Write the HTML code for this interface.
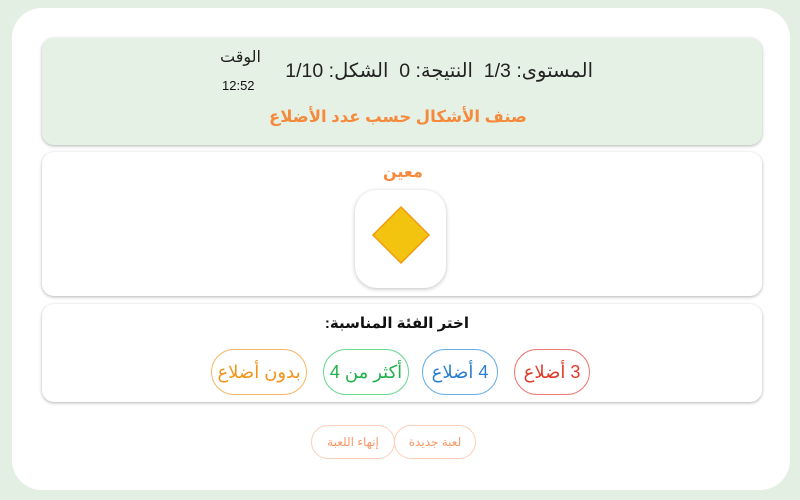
<!DOCTYPE html>
<html dir="rtl"><head><meta charset="utf-8"><style>
*{box-sizing:border-box;margin:0;padding:0}
body{width:800px;height:500px;background:#e4efe4;font-family:"Liberation Sans","DejaVu Sans",sans-serif;position:relative;overflow:hidden}
.card{position:absolute;left:12px;top:8px;width:778px;height:482px;background:#fff;border-radius:30px}
.p{position:absolute;left:42px;width:720px;border-radius:12px;box-shadow:0 1px 3px rgba(0,0,0,.3);background:#fff}
.t{position:absolute;white-space:nowrap}
.btn{position:absolute;top:349px;height:46px;border-radius:23px;border:1px solid;font-size:18px;display:flex;align-items:center;justify-content:center;background:#fff}
.sb{position:absolute;top:425px;height:34px;border:1px solid #fcd0b8;border-radius:17px;color:#f79a6a;font-size:12px;display:flex;align-items:center;justify-content:center}
</style></head><body>
<div class="card"></div>
<div class="p" style="top:38px;height:107px;background:#e6f1e6"></div>
<div class="t" style="right:207px;top:59px;font-size:19.5px;color:#222">المستوى: 1/3&nbsp; النتيجة: 0&nbsp; الشكل: 1/10</div>
<div class="t" style="left:220px;top:47px;font-size:16px;color:#222">الوقت</div>
<div class="t" style="left:222px;top:78px;font-size:13px;color:#111;direction:ltr">12:52</div>
<div class="t" style="right:273px;top:107px;font-size:16.5px;font-weight:bold;color:#f58a3c">صنف الأشكال حسب عدد الأضلاع</div>
<div class="p" style="top:152px;height:144px"></div>
<div class="t" style="left:383px;top:162px;font-size:16px;font-weight:bold;color:#f58a3c">معين</div>
<div style="position:absolute;left:355px;top:190px;width:91px;height:98px;border-radius:22px;background:#fff;box-shadow:0 1px 4px rgba(0,0,0,.25)"></div>
<svg style="position:absolute;left:355px;top:190px" width="91" height="98"><polygon points="46,17 74,45 46,73 18,45" fill="#f2c40f" stroke="#f29a0f" stroke-width="1.5"/></svg>
<div class="p" style="top:304px;height:98px"></div>
<div class="t" style="right:331px;top:314px;font-size:15px;font-weight:bold;color:#111">اختر الفئة المناسبة:</div>
<div class="btn" style="left:514px;width:76px;border-color:#ec7a72;color:#e03a2a">3 أضلاع</div>
<div class="btn" style="left:422px;width:76px;border-color:#6aaee8;color:#2a7fd0">4 أضلاع</div>
<div class="btn" style="left:323px;width:86px;border-color:#6cd890;color:#22b04a">أكثر من 4</div>
<div class="btn" style="left:211px;width:96px;border-color:#f7b86a;color:#f29418">بدون أضلاع</div>
<div class="sb" style="left:394px;width:82px">لعبة جديدة</div>
<div class="sb" style="left:311px;width:84px">إنهاء اللعبة</div>
</body></html>
